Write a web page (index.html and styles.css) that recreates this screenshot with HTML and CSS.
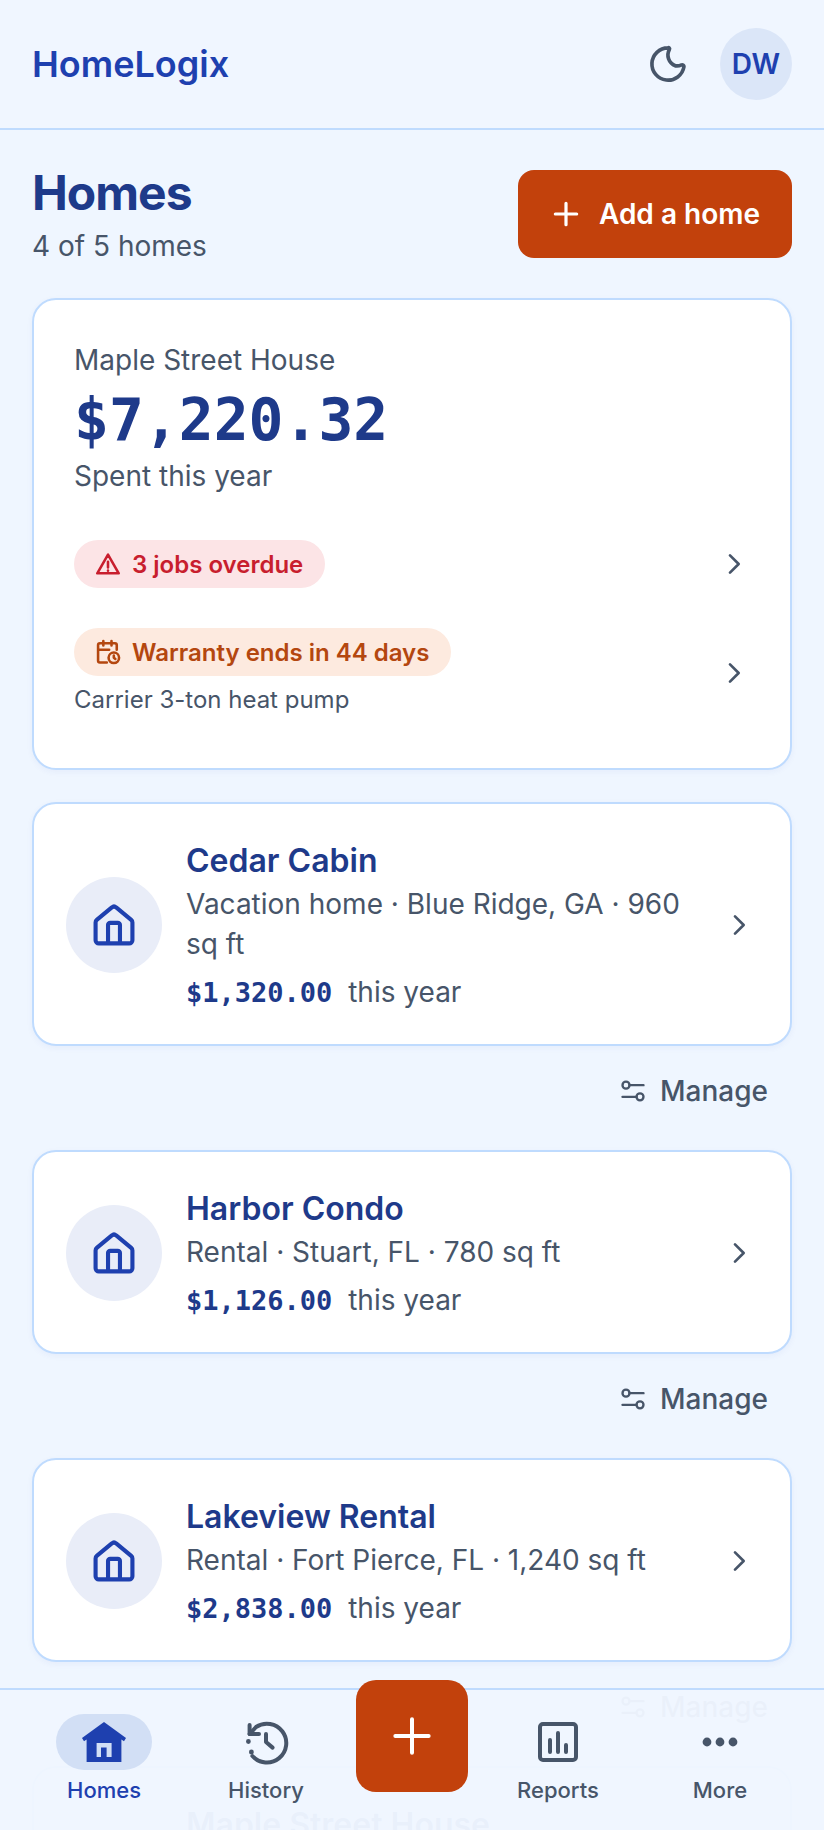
FILE: index.html
```html
<!DOCTYPE html>
<html>
<head>
	<meta charset="utf-8">
	<title>HomeLogix</title>
	<link rel="stylesheet" href="styles.css">
</head>
<body>
  <header class="topbar">
    <div class="logo">HomeLogix</div>
    <div class="topbar-actions">
      <svg class="icon moon" viewBox="0 0 24 24"><path d="M12 3.200a8.800 8.800 0 1 0 8.700 10.300 1 1 0 0 0-1.300-1A6 6 0 0 1 16 13a6.300 6.300 0 0 1-3.200-9 .6.6 0 0 0-.8-.8z"/></svg>
      <div class="avatar">DW</div>
    </div>
  </header>

  <main class="content">
    <div class="title-row">
      <div>
        <h1>Homes</h1>
        <p class="subtitle">4 of 5 homes</p>
      </div>
      <button class="add-btn">
        <svg class="icon add-icon" viewBox="0 0 24 24"><path d="M12 4v16M4 12h16"/></svg>
        Add a home
      </button>
    </div>

    <section class="card hero">
      <div class="hero-name">Maple Street House</div>
      <div class="hero-amount">$7,220.32</div>
      <div class="hero-label">Spent this year</div>

      <div class="alert alert-first">
        <div>
          <span class="pill pill-red">
            <svg class="icon pill-icon" viewBox="0 0 24 24"><path d="M12 4 2.800 20h18.400zM12 10v5M12 17.600v.2"/></svg>
            3 jobs overdue
          </span>
        </div>
        <svg class="icon chevron" viewBox="0 0 24 24"><path d="m9 5.500 6.500 6.500L9 18.500"/></svg>
      </div>

      <div class="alert alert-second">
        <div>
          <span class="pill pill-orange">
            <svg class="icon pill-icon" viewBox="0 0 24 24"><path d="M11 21H5a1.500 1.500 0 0 1-1.500-1.500V6A1.500 1.500 0 0 1 5 4.500h13A1.500 1.500 0 0 1 19.500 6v4M8 2.500v4M15 2.500v4M3.500 10H13"/><circle cx="17" cy="17" r="4.500"/><path d="M17 15v2l1.300 1"/></svg>
            Warranty ends in 44 days
          </span>
          <div class="alert-note">Carrier 3-ton heat pump</div>
        </div>
        <svg class="icon chevron" viewBox="0 0 24 24"><path d="m9 5.500 6.500 6.500L9 18.500"/></svg>
      </div>
    </section>

    <section class="card home-card">
      <div class="home-badge">
        <svg class="icon home-icon" viewBox="0 0 24 24"><path d="M3.500 10.800a1.500 1.500 0 0 1 .55-1.150L11 3.900a1.500 1.500 0 0 1 2 0l6.950 5.750a1.500 1.500 0 0 1 .55 1.150V19a1.500 1.500 0 0 1-1.500 1.500H5A1.500 1.500 0 0 1 3.500 19zM9.250 20.500V12a1 1 0 0 1 1-1h3.500a1 1 0 0 1 1 1v8.500"/></svg>
      </div>
      <div class="home-info">
        <div class="home-name">Cedar Cabin</div>
        <div class="home-meta">Vacation home · Blue Ridge, GA · 960 sq ft</div>
        <div class="home-spend"><span class="money">$1,320.00</span> this year</div>
      </div>
      <svg class="icon chevron" viewBox="0 0 24 24"><path d="m9 5.500 6.500 6.500L9 18.500"/></svg>
    </section>
    <div class="manage-row">
      <span class="manage">
        <svg class="icon manage-icon" viewBox="0 0 24 24"><circle cx="6" cy="7" r="3"/><path d="M9 7h12M3 17h12"/><circle cx="18" cy="17" r="3"/></svg>
        Manage
      </span>
    </div>

    <section class="card home-card">
      <div class="home-badge">
        <svg class="icon home-icon" viewBox="0 0 24 24"><path d="M3.500 10.800a1.500 1.500 0 0 1 .55-1.150L11 3.900a1.500 1.500 0 0 1 2 0l6.950 5.750a1.500 1.500 0 0 1 .55 1.150V19a1.500 1.500 0 0 1-1.500 1.500H5A1.500 1.500 0 0 1 3.500 19zM9.250 20.500V12a1 1 0 0 1 1-1h3.500a1 1 0 0 1 1 1v8.500"/></svg>
      </div>
      <div class="home-info">
        <div class="home-name">Harbor Condo</div>
        <div class="home-meta">Rental · Stuart, FL · 780 sq ft</div>
        <div class="home-spend"><span class="money">$1,126.00</span> this year</div>
      </div>
      <svg class="icon chevron" viewBox="0 0 24 24"><path d="m9 5.500 6.500 6.500L9 18.500"/></svg>
    </section>
    <div class="manage-row">
      <span class="manage">
        <svg class="icon manage-icon" viewBox="0 0 24 24"><circle cx="6" cy="7" r="3"/><path d="M9 7h12M3 17h12"/><circle cx="18" cy="17" r="3"/></svg>
        Manage
      </span>
    </div>

    <section class="card home-card">
      <div class="home-badge">
        <svg class="icon home-icon" viewBox="0 0 24 24"><path d="M3.500 10.800a1.500 1.500 0 0 1 .55-1.150L11 3.900a1.500 1.500 0 0 1 2 0l6.950 5.750a1.500 1.500 0 0 1 .55 1.150V19a1.500 1.500 0 0 1-1.500 1.500H5A1.500 1.500 0 0 1 3.500 19zM9.250 20.500V12a1 1 0 0 1 1-1h3.500a1 1 0 0 1 1 1v8.500"/></svg>
      </div>
      <div class="home-info">
        <div class="home-name">Lakeview Rental</div>
        <div class="home-meta">Rental · Fort Pierce, FL · 1,240 sq ft</div>
        <div class="home-spend"><span class="money">$2,838.00</span> this year</div>
      </div>
      <svg class="icon chevron" viewBox="0 0 24 24"><path d="m9 5.500 6.500 6.500L9 18.500"/></svg>
    </section>
    <div class="manage-row">
      <span class="manage">
        <svg class="icon manage-icon" viewBox="0 0 24 24"><circle cx="6" cy="7" r="3"/><path d="M9 7h12M3 17h12"/><circle cx="18" cy="17" r="3"/></svg>
        Manage
      </span>
    </div>

    <section class="card home-card home-card-top">
      <div class="home-badge"></div>
      <div class="home-info">
        <div class="home-name">Maple Street House</div>
      </div>
    </section>
  </main>

  <nav class="bottom-nav">
    <div class="nav-item nav-active">
      <div class="nav-pill">
        <svg class="nav-icon home-fill" viewBox="0 0 24 24"><path fill-rule="evenodd" d="M12 2 1 10l1 1.600 1.300-.8V22h17.400V10.800l1.300.8 1-1.600zM8.300 19.500v-7h7.500v7h-2.500v-4.700h-2.800v4.700z"/></svg>
      </div>
      <span>Homes</span>
    </div>
    <div class="nav-item">
      <div class="nav-pill">
        <svg class="nav-icon nav-stroke" viewBox="0 0 24 24"><path d="M3.800 3.500V8h4.700"/><path d="M3.800 8 7 4.500A9.700 9.700 0 1 1 5.200 19"/><path d="M12 8v4l3.300 2.800"/><path class="dot" d="M3.200 11.700v.1M4.700 17v.1"/></svg>
      </div>
      <span>History</span>
    </div>
    <div class="fab-slot">
      <button class="fab">
        <svg class="icon fab-icon" viewBox="0 0 24 24"><path d="M12 2v20M2 12h20"/></svg>
      </button>
    </div>
    <div class="nav-item">
      <div class="nav-pill">
        <svg class="nav-icon nav-stroke" viewBox="0 0 24 24"><rect x="3" y="3" width="18" height="18" rx="1.500"/><path d="M8 11v6M12 7.500V17M16 13.500V17"/></svg>
      </div>
      <span>Reports</span>
    </div>
    <div class="nav-item">
      <div class="nav-pill">
        <svg class="nav-icon more-dots" viewBox="0 0 24 24"><circle cx="5.500" cy="12" r="2.200"/><circle cx="12" cy="12" r="2.200"/><circle cx="18.500" cy="12" r="2.200"/></svg>
      </div>
      <span>More</span>
    </div>
  </nav>
</body>

</html>
```

FILE: styles.css
```css
html, body {
	height: 1830px;
	overflow: hidden;
}
body {
	position: relative;
	font-family: Inter, "Noto Sans", sans-serif;
	margin: 0;
	padding: 0;
	background: #eff6ff;
	color: #475569;
}
.icon {
	fill: none;
	stroke: currentColor;
	stroke-width: 2;
	stroke-linecap: round;
	stroke-linejoin: round;
	flex: none;
}

/* top bar */
.topbar {
	display: flex;
	align-items: center;
	justify-content: space-between;
	height: 128px;
	padding: 0 32px;
	background: #f0f6ff;
	border-bottom: 2px solid #bfdbfe;
}
.logo {
	font-size: 36px;
	font-weight: 600;
	color: #1e40af;
}
.topbar-actions {
	display: flex;
	align-items: center;
	gap: 30px;
}
.moon {
	width: 44px;
	height: 44px;
	color: #475569;
}
.avatar {
	width: 72px;
	height: 72px;
	border-radius: 50%;
	background: #dbe6f8;
	color: #1e40af;
	font-size: 28px;
	font-weight: 600;
	display: flex;
	align-items: center;
	justify-content: center;
}

/* page */
.content {
	padding: 40px 32px 0;
}
.title-row {
	display: flex;
	justify-content: space-between;
	align-items: flex-start;
	margin-bottom: 32px;
}
h1 {
	font-size: 48px;
	line-height: 46px;
	font-weight: 700;
	letter-spacing: -1px;
	color: #1e3a8a;
	margin: 0;
}
.subtitle {
	font-size: 28px;
	line-height: 40px;
	margin: 10px 0 0;
}
.add-btn {
	display: flex;
	align-items: center;
	gap: 17px;
	height: 88px;
	padding: 0 32px;
	border: none;
	border-radius: 16px;
	background: #c2410c;
	color: #fff;
	font-family: inherit;
	font-size: 28px;
	font-weight: 600;
}
.add-icon {
	width: 32px;
	height: 32px;
	stroke-width: 2.4;
}

/* cards */
.card {
	background: #fff;
	border: 2px solid #bfdbfe;
	border-radius: 24px;
	box-shadow: 0 2px 6px rgba(30, 64, 175, 0.05);
}
.hero {
	padding: 39px 34px 51px 40px;
	margin-bottom: 32px;
}
.hero-name {
	font-size: 28px;
	line-height: 42px;
}
.hero-amount {
	font-family: "DejaVu Sans Mono", monospace;
	font-size: 58px;
	font-weight: 700;
	line-height: 69px;
	margin-top: 5px;
	color: #1e3a8a;
}
.hero-label {
	font-size: 28px;
	line-height: 42px;
}
.alert {
	display: flex;
	align-items: center;
	justify-content: space-between;
}
.alert-first {
	margin-top: 43px;
}
.alert-second {
	margin-top: 40px;
}
.pill {
	display: inline-flex;
	align-items: center;
	gap: 10px;
	height: 48px;
	padding: 0 22px 0 20px;
	border-radius: 24px;
	font-size: 24px;
	font-weight: 600;
}
.pill-red {
	background: #fce4e6;
	color: #c81e2e;
}
.pill-orange {
	background: #fdeadf;
	color: #b4470f;
}
.pill-icon {
	width: 28px;
	height: 28px;
	stroke-width: 2.2;
}
.alert-note {
	font-size: 24px;
	line-height: 34px;
	margin-top: 7px;
}
.chevron {
	width: 32px;
	height: 32px;
	color: #475569;
	margin-right: 6px;
}
.home-card {
	display: flex;
	align-items: center;
	gap: 24px;
	padding: 32px 32px 31px;
}
.home-card .chevron {
	margin-right: 3px;
}
.home-card-top {
	align-items: flex-start;
}
.home-card-top .home-badge {
	margin-top: 22px;
}
.home-badge {
	width: 96px;
	height: 96px;
	border-radius: 50%;
	background: #e9edf8;
	display: flex;
	align-items: center;
	justify-content: center;
	flex: none;
}
.home-icon {
	width: 52px;
	height: 52px;
	stroke-width: 1.9;
	color: #1e40af;
}
.home-info {
	flex: 1;
	min-width: 0;
	padding-top: 2px;
}
.home-name {
	font-size: 32px;
	line-height: 46px;
	font-weight: 600;
	color: #1e3a8a;
}
.home-meta {
	font-size: 28px;
	line-height: 40px;
}
.home-spend {
	font-size: 28px;
	line-height: 40px;
	margin-top: 8px;
}
.money {
	font-family: "DejaVu Sans Mono", monospace;
	font-size: 27px;
	font-weight: 700;
	color: #1e3a8a;
	margin-right: 8px;
}
.manage-row {
	display: flex;
	justify-content: flex-end;
	height: 104px;
	padding: 20px 24px 0 0;
	box-sizing: border-box;
}
.manage {
	display: inline-flex;
	align-items: center;
	gap: 13px;
	height: 50px;
	font-size: 28px;
	font-weight: 500;
}
.manage-icon {
	width: 28px;
	height: 28px;
}

/* bottom nav */
.bottom-nav {
	position: absolute;
	left: 0;
	right: 0;
	bottom: 0;
	height: 142px;
	box-sizing: border-box;
	display: flex;
	align-items: flex-start;
	padding: 24px 23px 0;
	background: rgba(240, 246, 255, 0.97);
	border-top: 2px solid #bfdbfe;
}
.nav-item {
	width: 162px;
	display: flex;
	flex-direction: column;
	align-items: center;
	font-size: 22px;
	line-height: 30px;
	font-weight: 500;
	color: #475569;
}
.nav-pill {
	width: 96px;
	height: 56px;
	border-radius: 28px;
	display: flex;
	align-items: center;
	justify-content: center;
	margin-bottom: 5px;
}
.nav-active {
	color: #1e40af;
}
.nav-active .nav-pill {
	background: #d2dff5;
}
.nav-icon {
	width: 48px;
	height: 48px;
}
.home-fill {
	fill: #1e40af;
}
.nav-stroke {
	fill: none;
	stroke: #475569;
	stroke-width: 2;
	stroke-linecap: round;
	stroke-linejoin: round;
}
.nav-stroke .dot {
	stroke-width: 2.4;
}
.more-dots {
	fill: #475569;
}
.fab-slot {
	width: 130px;
	display: flex;
	justify-content: center;
}
.fab {
	width: 112px;
	height: 112px;
	margin-top: -34px;
	border: none;
	border-radius: 20px;
	background: #c2410c;
	color: #fff;
	display: flex;
	align-items: center;
	justify-content: center;
	padding: 0;
}
.fab-icon {
	width: 40px;
	height: 40px;
	stroke-width: 2.4;
}
```
